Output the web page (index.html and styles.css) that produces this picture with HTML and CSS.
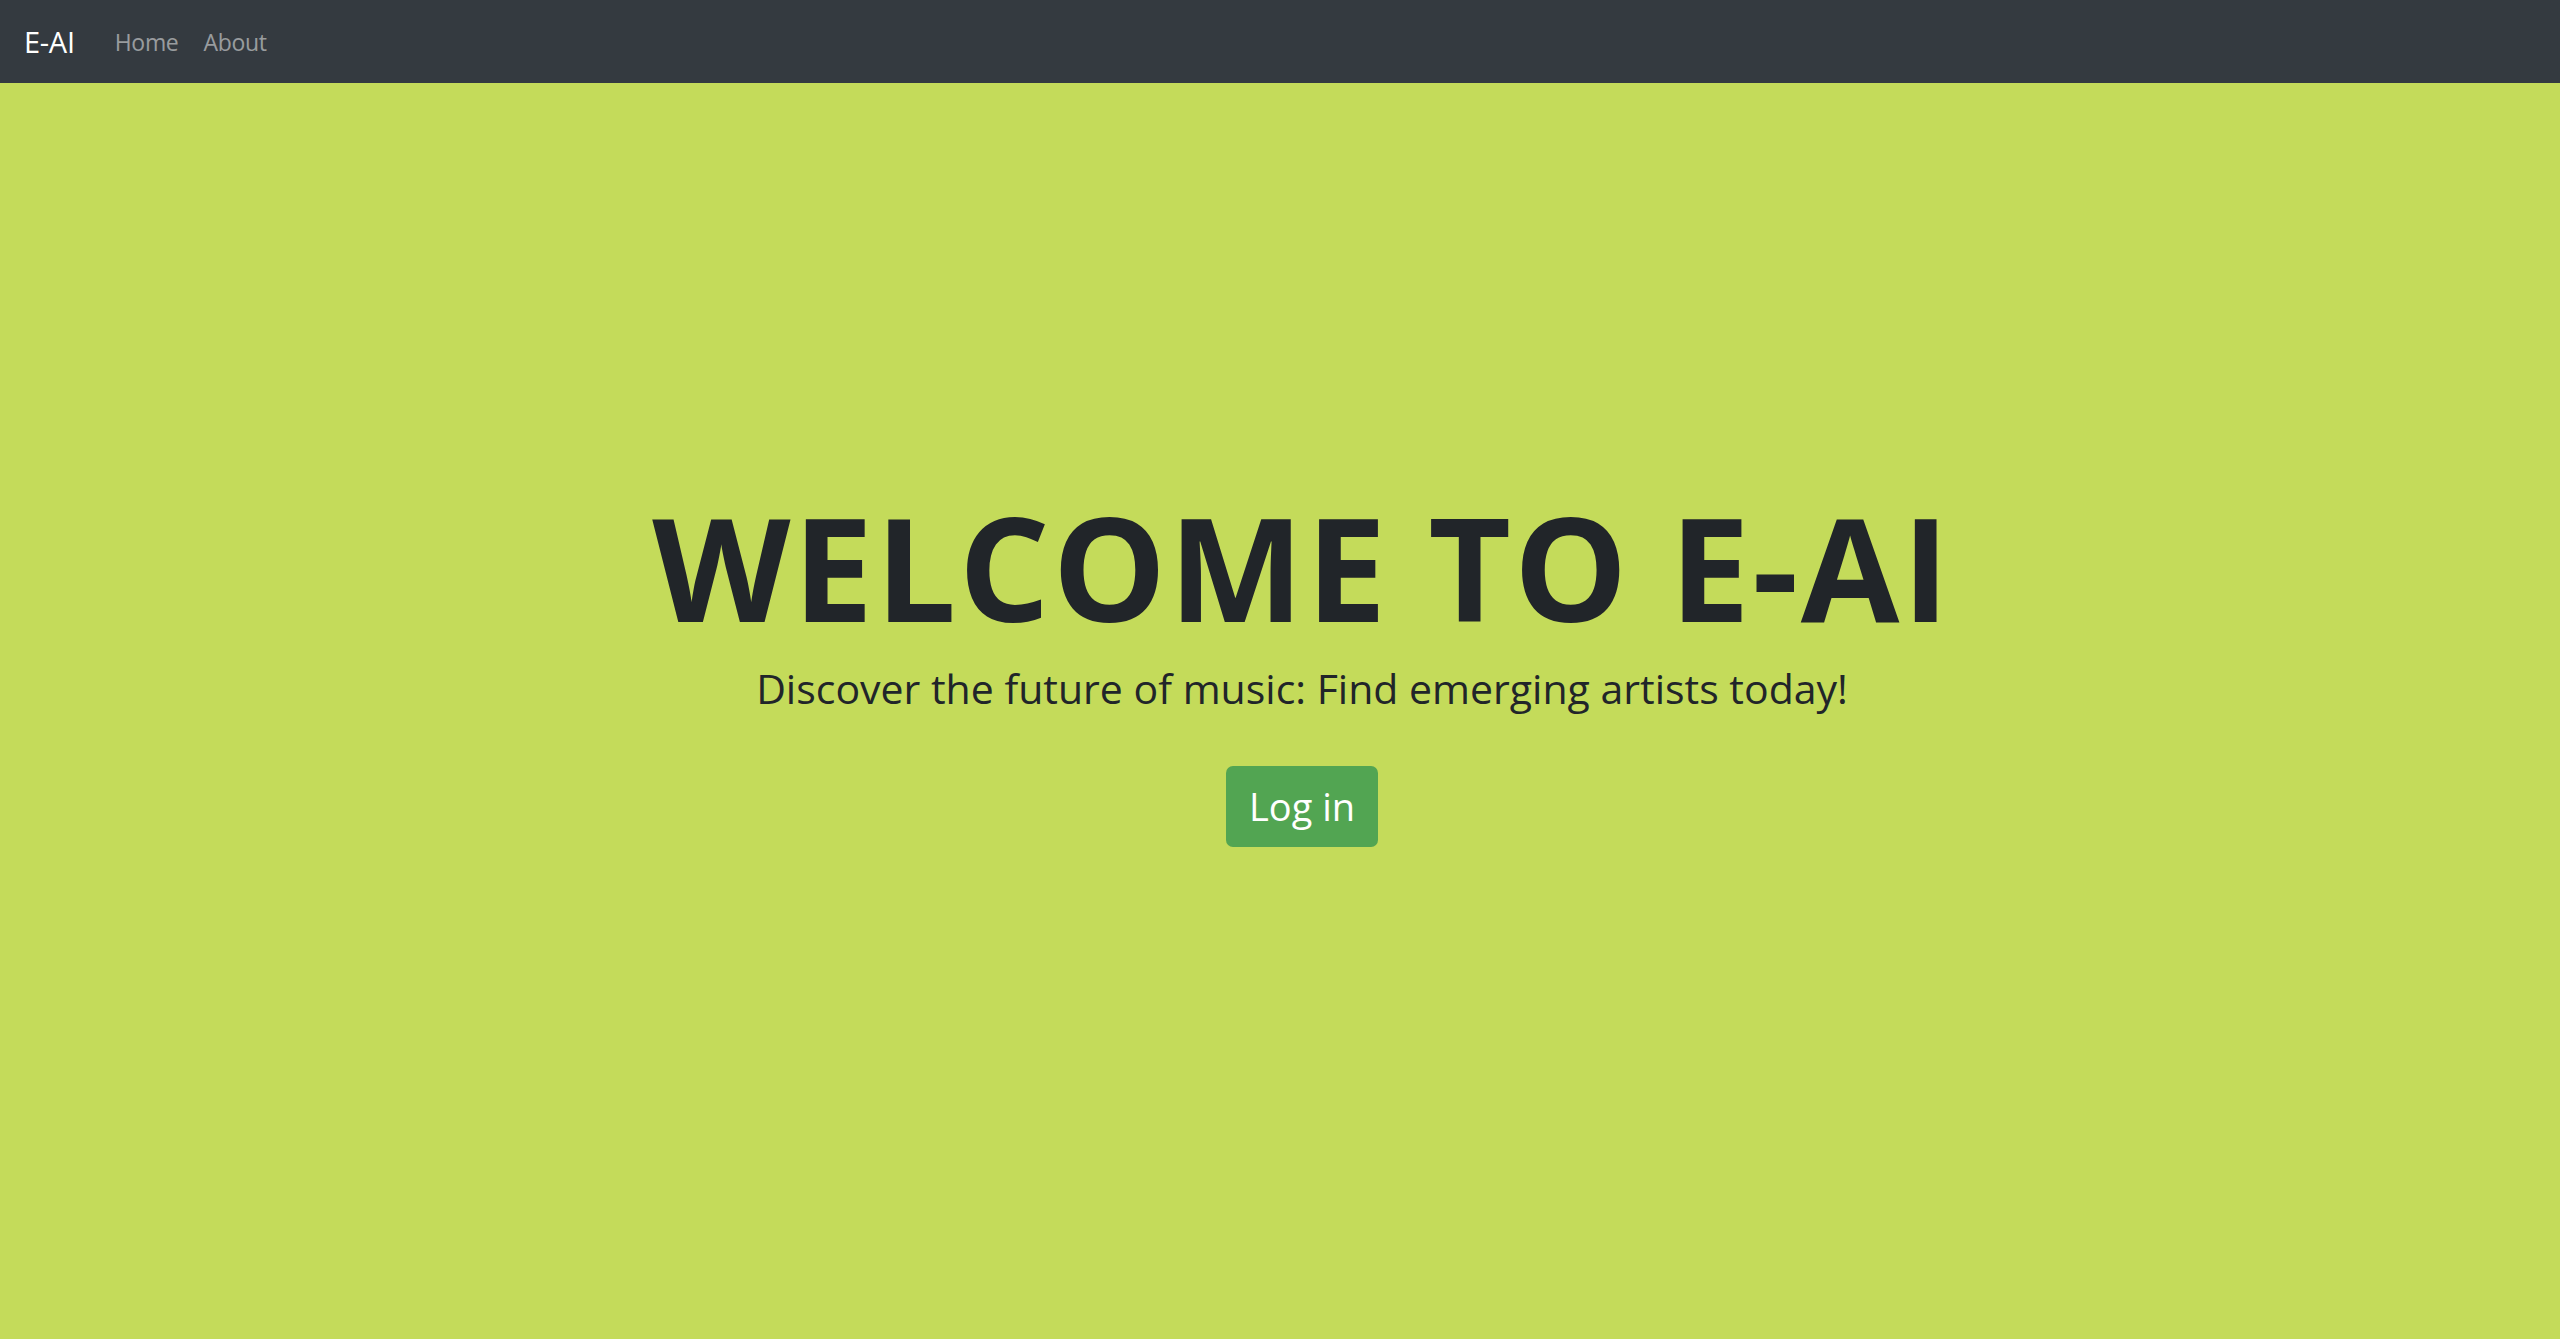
FILE: index.html
```html
<!DOCTYPE html>
<html lang="en">
<head>
<meta charset="utf-8">
<title>E-AI</title>
<link rel="stylesheet" href="styles.css">
</head>
<body>
<nav class="navbar">
  <a class="brand" href="#">E-AI</a>
  <ul class="nav-links">
    <li><a href="#">Home</a></li>
    <li><a href="#">About</a></li>
  </ul>
</nav>
<main class="hero">
  <h1 class="hero-title">WELCOME TO E-AI</h1>
  <p class="hero-lead">Discover the future of music: Find emerging artists today!</p>
  <a class="btn-login" href="#">Log in</a>
</main>
</body>
</html>
```

FILE: styles.css
```css
* { box-sizing: border-box; }
html, body { margin: 0; height: 100%; }
body {
  font-family: "Open Sans", "Noto Sans", sans-serif;
  background: #c4db5a;
  color: #212529;
  display: flex;
  flex-direction: column;
}
a { text-decoration: none; }
.navbar {
  height: 83px;
  background: #343a40;
  display: flex;
  align-items: center;
  padding: 0 24px;
  flex-shrink: 0;
}
.brand {
  color: #ffffff;
  font-size: 29px;
  letter-spacing: -0.3px;
  margin-right: 40px;
}
.nav-links {
  list-style: none;
  margin: 0;
  padding: 0;
  display: flex;
  gap: 25px;
}
.nav-links a {
  color: rgba(255, 255, 255, 0.5);
  font-size: 23px;
  letter-spacing: -0.3px;
}
.hero {
  flex: 1;
  display: flex;
  flex-direction: column;
  align-items: center;
  justify-content: center;
  padding: 0 0 94px 44px;
}
.hero-title {
  margin: 0 0 11px;
  font-size: 143px;
  font-weight: 700;
  line-height: 1.2;
  letter-spacing: 2.5px;
}
.hero-lead {
  margin: 0 0 53px;
  font-size: 41px;
  line-height: 1.2;
  letter-spacing: 0;
}
.btn-login {
  display: inline-block;
  background: #52a552;
  color: #ffffff;
  font-size: 38px;
  line-height: 1.5;
  padding: 12px 23px;
  border-radius: 7px;
}
```
